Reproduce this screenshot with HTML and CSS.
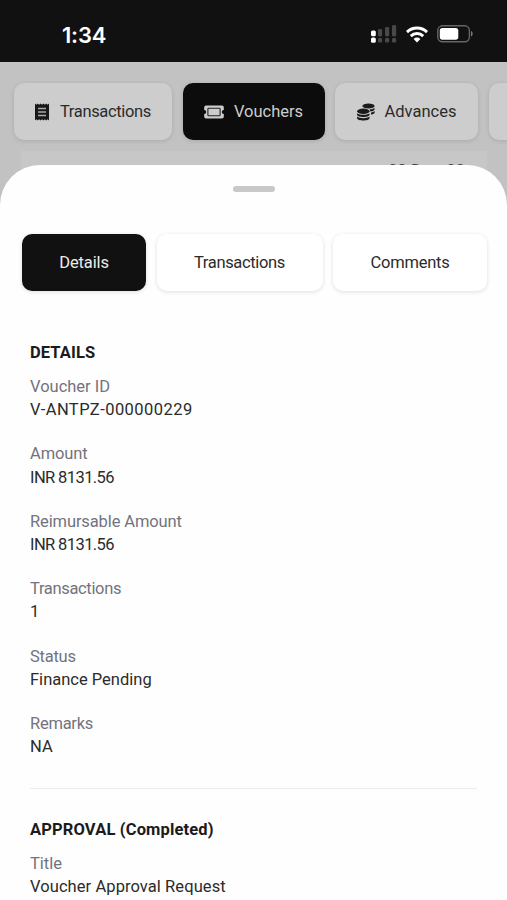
FILE: index.html
```html
<!DOCTYPE html>
<html lang="en">
<head>
<meta charset="utf-8">
<title>Voucher Details</title>
<link rel="stylesheet" href="styles.css">
</head>
<body>
<div class="screen">
  <header class="status-bar">
    <span class="time">1:34</span>
    <div class="indicators">
      <svg class="signal" width="26" height="18" viewBox="0 0 26 18"><g fill="#484848"><rect x="7" y="4" width="4.2" height="7.5" rx="1.4"/><rect x="14" y="2" width="4.2" height="9.5" rx="1.4"/><rect x="21" y="0" width="4.2" height="11.5" rx="1.4"/><rect x="7" y="13" width="4.2" height="4.6" rx="1.4"/><rect x="14" y="13" width="4.2" height="4.6" rx="1.4"/><rect x="21" y="13" width="4.2" height="4.6" rx="1.4"/></g><g fill="#fff"><rect x="0" y="5.5" width="4.8" height="5.8" rx="1.5"/><rect x="0" y="12.5" width="4.8" height="5.3" rx="1.6"/></g></svg>
      <svg class="wifi" width="22" height="17" viewBox="0 0 22 17"><g fill="none" stroke="#fff" stroke-width="2.9"><path d="M1 6.1a14.3 14.3 0 0 1 20 0"/><path d="M4.8 10.1a8.8 8.8 0 0 1 12.4 0"/></g><path d="M11 16.4 7.6 13a4.8 4.8 0 0 1 6.8 0z" fill="#fff"/></svg>
      <svg class="battery" width="36" height="18" viewBox="0 0 36 18"><rect x=".8" y=".8" width="31.6" height="16" rx="4.8" fill="none" stroke="#666" stroke-width="1.4"/><rect x="2.8" y="2.9" width="18.5" height="11.8" rx="2.6" fill="#fff"/><path d="M34 6c2.2.8 2.2 4.8 0 5.6z" fill="#777"/></svg>
    </div>
  </header>
  <main class="page">
    <nav class="main-tabs">
      <div class="tab tab-receipts">
        <svg width="14" height="18" viewBox="0 0 14 18"><path d="M0 .5 1.4 1.8 2.8.5 4.2 1.8 5.6.5 7 1.8 8.4.5 9.8 1.8 11.2.5 12.6 1.8 14 .5v17l-1.4-1.3-1.4 1.3-1.4-1.3-1.4 1.3L7 16.2l-1.4 1.3-1.4-1.3-1.4 1.3-1.4-1.3L0 17.5z" fill="#171717"/><path d="M3 5.5h8M3 9h8M3 12.5h8" stroke="#aaa" stroke-width="1.3"/></svg>
        <span class="w-transactions">Transactions</span>
      </div>
      <div class="tab tab-vouchers active">
        <svg width="20" height="14" viewBox="0 0 20 14"><path d="M2 .5h16a1.8 1.8 0 0 1 1.8 1.8V5a2 2 0 0 0 0 4v2.700a1.800 1.800 0 0 1-1.800 1.800H2A1.800 1.800 0 0 1 .2 11.700V9a2 2 0 0 0 0-4V2.300A1.800 1.800 0 0 1 2 .5z" fill="#ccc"/><rect x="3.900" y="3.200" width="12.200" height="7.600" rx=".8" fill="none" stroke="#222" stroke-width="1.100"/></svg>
        <span>Vouchers</span>
      </div>
      <div class="tab tab-advances">
        <svg width="18" height="18" viewBox="0 0 18 18"><g fill="#1b1b1b"><ellipse cx="11.500" cy="3" rx="6.100" ry="2.500"/><path d="M12.500 6.500c2.200-.2 4-.8 5-1.800v1.500c0 1.100-1.700 2-4 2.300zM14 9.600c1.500-.3 2.800-.8 3.600-1.500v1.500c0 .9-1.300 1.700-3.400 2.100z"/><ellipse cx="6.300" cy="8.300" rx="6.200" ry="2.700"/><path d="M.1 10.200c2.500 2.200 9.800 2.200 12.400 0v1.500c0 3-12.400 3-12.400 0zM.1 13.600c2.500 2.200 9.800 2.200 12.400 0v1.600c0 3-12.400 3-12.400 0z"/></g></svg>
        <span>Advances</span>
      </div>
      <div class="tab tab-next"></div>
    </nav>
    <div class="voucher-card"><span>20 Dec, 22</span></div>
  </main>
  <section class="sheet">
    <div class="handle"></div>
    <nav class="sheet-tabs">
      <div class="tab active"><span class="w-details">Details</span></div>
      <div class="tab"><span class="w-transactions">Transactions</span></div>
      <div class="tab"><span class="w-comments">Comments</span></div>
    </nav>
    <div class="content">
      <h2 class="w-heading">DETAILS</h2>
      <dl>
        <div><dt>Voucher ID</dt><dd class="w-id">V-ANTPZ-000000229</dd></div>
        <div><dt class="w-details">Amount</dt><dd class="w-inr">INR 8131.56</dd></div>
        <div><dt class="w-details">Reimursable Amount</dt><dd class="w-inr">INR 8131.56</dd></div>
        <div><dt class="w-transactions">Transactions</dt><dd>1</dd></div>
        <div><dt class="w-comments">Status</dt><dd>Finance Pending</dd></div>
        <div><dt class="w-comments">Remarks</dt><dd>NA</dd></div>
      </dl>
      <hr>
      <h2 class="w-approval">APPROVAL (Completed)</h2>
      <dl>
        <div><dt>Title</dt><dd class="w-request">Voucher Approval Request</dd></div>
      </dl>
    </div>
  </section>
</div>
</body>
</html>
```
FILE: styles.css
```css
* { box-sizing: border-box; }
body { margin: 0; font-family: Roboto, "Liberation Sans", sans-serif; font-size: 16.5px; color: #2b2b2b; }
.screen { position: relative; width: 507px; height: 900px; overflow: hidden; background: #c2c2c2; }
.status-bar { display: flex; justify-content: space-between; height: 62px; padding: 25px 34px 0 62px; background: #111; }
.time { font: 600 22px/20px Inter, sans-serif; letter-spacing: -.2px; color: #fff; }
.indicators { display: flex; align-items: flex-start; gap: 9px; }
.wifi { margin-top: 1px; }
.page { padding: 21px 0 0 14px; }
.main-tabs { display: flex; gap: 10.5px; }
.tab { display: flex; align-items: center; justify-content: center; flex: none; height: 57px; border-radius: 10px; white-space: nowrap; }
.main-tabs .tab { background: #cdcdcd; box-shadow: 0 1px 4px rgba(0,0,0,.13); gap: 10px; }
.main-tabs .active { background: #0c0c0c; color: #ccc; }
.main-tabs svg { flex: none; }
.main-tabs .tab-receipts { width: 158px; gap: 11px; }
.tab-vouchers { width: 142px; }
.tab-advances { width: 143px; }
.tab-next { width: 120px; }
.voucher-card { width: 466px; height: 60px; margin: 11px 0 0 7px; padding: 10px 22px; text-align: right; background: #c7c7c7; color: #444; }
.sheet { position: absolute; left: 0; top: 165px; width: 507px; height: 735px; border-radius: 40px 40px 0 0; background: #fefefe; overflow: hidden; }
.handle { width: 42px; height: 6px; margin: 21px auto 0 233px; border-radius: 3px; background: #c8c8c8; }
.sheet-tabs { display: grid; grid-template-columns: 124px 166px 154px; gap: 10.5px; margin: 42px 0 0 22px; }
.sheet-tabs .tab { background: #fff; box-shadow: 0 1px 4px rgba(0,0,0,.13); }
.sheet-tabs .active { background: #111; color: #ececec; }
.content { padding: 50px 30px 0; }
h2 { margin: 0 0 10px; font-size: 16.5px; line-height: 24px; font-weight: 700; color: #1b1b1b; }
dl { display: grid; gap: 21px; margin: 0; }
dl > div { height: 46.4px; }
dt, dd { width: max-content; margin: 0; line-height: 23.2px; }
dt { color: #73737d; }
hr { height: 1px; margin: 30px 0 28.5px; border: 0; background: #ececec; }
.w-transactions { letter-spacing: -.34px; }
.w-details { letter-spacing: -.12px; }
.w-comments { letter-spacing: -.25px; }
.w-id { letter-spacing: .45px; }
.w-inr { letter-spacing: -.6px; }
.w-heading { letter-spacing: .1px; }
.w-approval { letter-spacing: .15px; }
.w-request { letter-spacing: .08px; }
```
